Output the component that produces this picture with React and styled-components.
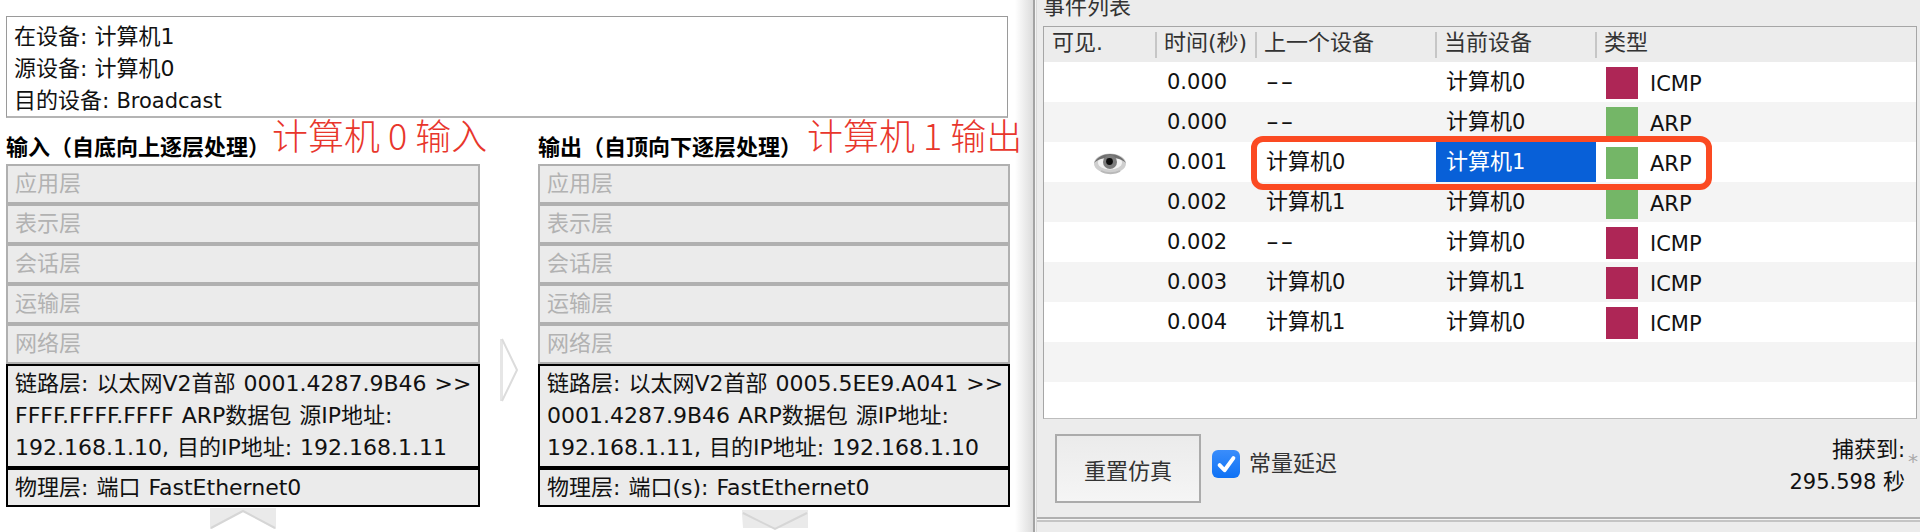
import React from "react";
import styled, { createGlobalStyle } from "styled-components";

const Global = createGlobalStyle`
  html, body { margin: 0; padding: 0; background: #fff; }
  body { font-family: "DejaVu Sans", "Noto Sans CJK SC", sans-serif; font-size: 22px; color: #111; }
  * { box-sizing: border-box; }
`;

const Page = styled.div`
  display: flex;
  width: 1920px;
  height: 532px;
  overflow: hidden;
`;

/* ---------- left: PDU details ---------- */
const Details = styled.section`
  width: 1033px;
  flex: none;
  padding: 16px 0 0 6px;
  background: linear-gradient(to right, #fff calc(100% - 18px), #dcdcdc);
`;

const InfoBox = styled.div`
  position: relative;
  z-index: 1;
  width: 1002px;
  height: 102px;
  padding: 4px 0 0 7px;
  background: #fff;
  border: 1px solid #9a9a9a;
  border-bottom: 2px solid #b4b4b4;
  line-height: 32px;
`;

const Latin = styled.span`
  font-size: 21px;
`;

const Columns = styled.div`
  display: flex;
`;

const Column = styled.div`
  position: relative;
  width: ${p => p.$width}px;
  flex: none;
`;

const ColumnTitle = styled.h3`
  margin: 0;
  height: 46px;
  padding-top: 12px;
  font: 700 22px/30px "Noto Sans CJK SC", sans-serif;
  color: #000;
`;

const Annotation = styled.div`
  position: absolute;
  left: ${p => p.$left}px;
  top: -10px;
  font: 300 36px/52px "Noto Sans CJK SC", sans-serif;
  color: #e8362c;
  white-space: nowrap;
`;

const Layer = styled.div`
  height: 40px;
  padding-left: 7px;
  line-height: 36px;
  background: #ebebeb;
  color: #b2b2b2;
  border: 2px solid #b0b0b0;
  box-shadow: 0 1px 0 #b0b0b0;
`;

const ActiveLayer = styled.div`
  padding: 2px 0 0 7px;
  height: ${p => p.$height}px;
  line-height: 32px;
  background: #ebebeb;
  color: #111;
  border: 2px solid #000;
  white-space: nowrap;
  word-spacing: 1px;
`;

const Line = styled.div`
  height: 32px;
`;

const SideArrow = styled.svg`
  display: block;
  width: 58px;
  height: 64px;
  flex: none;
  margin-top: 220px;
`;

const Vertical = styled.svg`
  display: block;
  width: 66px;
  height: 21px;
  margin: ${p => p.$top}px 0 0 ${p => p.$left}px;
`;

const Split = styled.div`
  width: 4px;
  flex: none;
  border-left: 2px solid #a3a3a3;
  border-right: 1px solid #d9d9d9;
  background: #f3f3f3;
`;

/* ---------- right: event list ---------- */
const Side = styled.section`
  flex: 1;
  display: flex;
  flex-direction: column;
  background: #ececec;
`;

const EventPanel = styled.div`
  height: 517px;
  padding: 0 3px 0 6px;
  flex: none;
`;

const PanelTitle = styled.div`
  height: 26px;
  margin-top: -6px;
  margin-bottom: 6px;
  line-height: 26px;
  color: #333;
`;

const Table = styled.div`
  position: relative;
  height: 393px;
  overflow: hidden;
  background: #fff;
  border: 1px solid #a6a6a6;
  border-bottom-color: #bdbdbd;
`;

const Head = styled.div`
  display: grid;
  grid-template-columns: 111px 100px 180px 160px 1fr;
  align-items: center;
  height: 35px;
  background: #ececec;
  color: #333;
`;

const HeadCell = styled.div`
  height: 26px;
  line-height: 22px;
  padding-left: ${p => p.$first ? 8 : 7}px;
  border-left: ${p => p.$first ? "none" : "2px solid #c6c6c6"};
  white-space: nowrap;
`;

const Row = styled.div`
  position: relative;
  display: grid;
  grid-template-columns: 111px 100px 181px 160px 1fr;
  height: 40px;
  background: ${p => p.$odd ? "#f4f4f4" : "#fff"};
  font-size: 21px;
`;

const Cell = styled.div`
  padding-left: ${p => p.$inset}px;
  line-height: 40px;
  white-space: nowrap;
  background: ${p => p.$sel ? "#0860d8" : "transparent"};
  color: ${p => p.$sel ? "#fff" : "#111"};
`;

const Han = styled.span`
  font-size: 22px;
`;

const Dash = styled.span`
  display: inline-block;
  letter-spacing: 1px;
  transform: scaleX(1.7);
  transform-origin: left center;
`;

const EyeCell = styled.div`
  display: flex;
  align-items: center;
  padding-left: 49px;
`;

const TypeCell = styled.div`
  display: flex;
  align-items: center;
  padding: 0 0 0 10px;
  gap: 12px;
`;

const TypeName = styled.span`
  line-height: 40px;
  padding-top: 2px;
`;

const Swatch = styled.span`
  width: 32px;
  height: 32px;
  background: ${p => p.$kind === "ICMP" ? "#ae2656" : "#74b667"};
`;

const Highlight = styled.div`
  position: absolute;
  left: 207px;
  top: 109px;
  width: 461px;
  height: 54px;
  border: 6px solid #fb4a22;
  border-radius: 12px;
  pointer-events: none;
`;

const Footer = styled.div`
  display: flex;
  margin-top: 15px;
  padding-left: 12px;
`;

const ResetButton = styled.button`
  width: 146px;
  height: 69px;
  border: 2px solid #ababab;
  background: linear-gradient(#ebebeb, #f5f5f5);
  font: inherit;
  color: #333;
  padding: 0;
`;

const CheckLabel = styled.label`
  display: flex;
  align-items: center;
  gap: 9px;
  height: 28px;
  margin: 16px 0 0 11px;
  line-height: 26px;
  color: #333;
`;

const CheckBox = styled.span`
  display: flex;
  align-items: center;
  justify-content: center;
  width: 28px;
  height: 28px;
  border-radius: 6px;
  background: linear-gradient(#3a8dfb, #0f72f5);
`;

const Capture = styled.div`
  position: relative;
  margin-left: auto;
  padding: 0 12px 0 0;
  text-align: right;
  line-height: 31px;
  font-size: 21px;
`;

const Star = styled.span`
  position: absolute;
  right: -1px;
  top: 17px;
  font-size: 20px;
  line-height: 20px;
  color: #aaa;
`;

const Rule = styled.div`
  height: 5px;
  flex: none;
  border-top: 2px solid #b0b0b0;
  border-bottom: 2px solid #c4c4c4;
  background: #f4f4f4;
`;

const Eye = () => (
  <svg width="34" height="24" viewBox="0 0 34 24">
    <ellipse cx="17" cy="12.5" rx="16" ry="10" fill="#cfcfcf" />
    <ellipse cx="17" cy="11.5" rx="12" ry="7" fill="#f2f2f2" />
    <path d="M1 12 C7 0 27 0 33 12 C26 5 8 5 1 12Z" fill="#6f6f6f" />
    <circle cx="17" cy="11" r="7" fill="#7c7c7c" />
    <circle cx="16.5" cy="10.5" r="3.4" fill="#0c0c0c" />
    <path d="M8 20 C13 23 22 23 27 20" stroke="#b9b9b9" strokeWidth="2" fill="none" />
  </svg>
);

const rows = [
  ["0.000", "--", "计算机0", "ICMP"],
  ["0.000", "--", "计算机0", "ARP"],
  ["0.001", "计算机0", "计算机1", "ARP"],
  ["0.002", "计算机1", "计算机0", "ARP"],
  ["0.002", "--", "计算机0", "ICMP"],
  ["0.003", "计算机0", "计算机1", "ICMP"],
  ["0.004", "计算机1", "计算机0", "ICMP"],
  null,
  null,
];

const device = s =>
  s === "--" ? <Dash>--</Dash> : <><Han>{s.slice(0, 3)}</Han>{s.slice(3)}</>;

const upper = ["应用层", "表示层", "会话层", "运输层", "网络层"];

const Stack = ({ title, note, noteLeft, link, phys }) => (
  <>
    <ColumnTitle>{title}</ColumnTitle>
    <Annotation $left={noteLeft}>{note}</Annotation>
    {upper.map(n => <Layer key={n}>{n}</Layer>)}
    <ActiveLayer $height={104}>
      {link.map(l => <Line key={l}>{l}</Line>)}
    </ActiveLayer>
    <ActiveLayer $height={39}>{phys}</ActiveLayer>
  </>
);

export default function App() {
  return (
    <Page>
      <Global />
      <Details>
        <InfoBox>
          <div>在设备: 计算机1</div>
          <div>源设备: 计算机0</div>
          <div>目的设备: <Latin>Broadcast</Latin></div>
        </InfoBox>
        <Columns>
          <Column $width={474}>
            <Stack
              title="输入（自底向上逐层处理）"
              note="计算机 0 输入"
              noteLeft={266}
              link={[
                "链路层: 以太网V2首部 0001.4287.9B46 >>",
                "FFFF.FFFF.FFFF ARP数据包 源IP地址:",
                "192.168.1.10, 目的IP地址: 192.168.1.11",
              ]}
              phys="物理层: 端口 FastEthernet0"
            />
            <Vertical $top={1} $left={204} viewBox="0 0 66 21">
              <path d="M0 0 H66 V21 H65 L33 3 L1 21 H0 Z" fill="#eaeaea" />
              <path d="M1 20 L33 3 L65 20" fill="none" stroke="#d6d6d6" strokeWidth="2" />
            </Vertical>
          </Column>
          <SideArrow viewBox="0 0 58 64">
            <rect x="20" y="1" width="3" height="62" fill="#e6e6e6" />
            <path d="M22 1 L37 32 L22 63" fill="none" stroke="#dcdcdc" strokeWidth="2" />
          </SideArrow>
          <Column $width={472}>
            <Stack
              title="输出（自顶向下逐层处理）"
              note="计算机 1 输出"
              noteLeft={269}
              link={[
                "链路层: 以太网V2首部 0005.5EE9.A041 >>",
                "0001.4287.9B46 ARP数据包 源IP地址:",
                "192.168.1.11, 目的IP地址: 192.168.1.10",
              ]}
              phys="物理层: 端口(s): FastEthernet0"
            />
            <Vertical $top={3} $left={204} viewBox="0 0 66 21">
              <path d="M0 0 H66 V18 H65 V4 L33 19 L1 4 V18 H0 Z M0 18 H32 L1 4 Z M66 18 H34 L65 4 Z" fill="#eaeaea" />
              <path d="M1 3 L33 19 L65 3" fill="none" stroke="#d6d6d6" strokeWidth="2" />
            </Vertical>
          </Column>
        </Columns>
      </Details>
      <Split />
      <Side>
        <EventPanel>
          <PanelTitle>事件列表</PanelTitle>
          <Table>
            <Head>
              <HeadCell $first>可见.</HeadCell>
              <HeadCell>时间(秒)</HeadCell>
              <HeadCell>上一个设备</HeadCell>
              <HeadCell>当前设备</HeadCell>
              <HeadCell>类型</HeadCell>
            </Head>
            {rows.map((r, i) => (
              <Row key={i} $odd={i % 2 === 1}>
                {r && (
                  <>
                    <EyeCell>{i === 2 && <Eye />}</EyeCell>
                    <Cell $inset={12}>{r[0]}</Cell>
                    <Cell $inset={11}>{device(r[1])}</Cell>
                    <Cell $inset={10} $sel={i === 2}>{device(r[2])}</Cell>
                    <TypeCell>
                      <Swatch $kind={r[3]} />
                      <TypeName>{r[3]}</TypeName>
                    </TypeCell>
                  </>
                )}
              </Row>
            ))}
            <Highlight />
          </Table>
          <Footer>
            <ResetButton>重置仿真</ResetButton>
            <CheckLabel>
              <CheckBox>
                <svg width="23" height="23" viewBox="0 0 20 20">
                  <path d="M4 10.5 L8.3 15 L16 4.5" fill="none" stroke="#fff" strokeWidth="3.4" strokeLinecap="round" strokeLinejoin="round" />
                </svg>
              </CheckBox>
              常量延迟
            </CheckLabel>
            <Capture>
              <div><Han>捕获到</Han>:</div>
              <div>295.598 <Han>秒</Han></div>
              <Star>*</Star>
            </Capture>
          </Footer>
        </EventPanel>
        <Rule />
      </Side>
    </Page>
  );
}
